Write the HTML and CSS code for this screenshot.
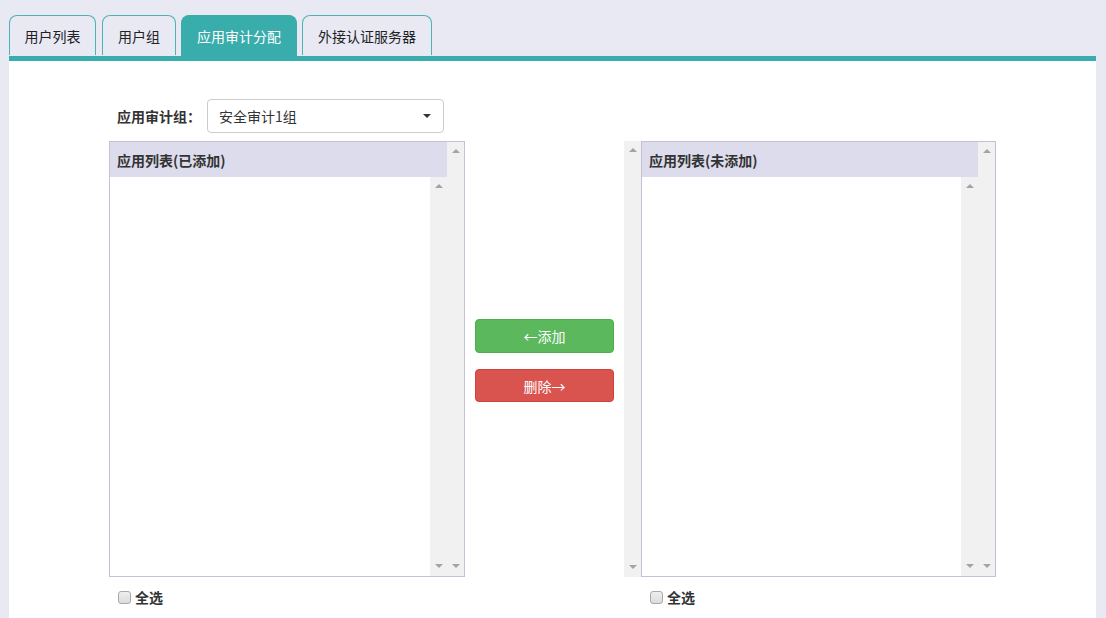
FILE: index.html
```html
<!DOCTYPE html>
<html lang="zh-CN">
<head>
<meta charset="utf-8">
<title>应用审计分配</title>
<link rel="stylesheet" href="styles.css">
</head>
<body>
<div class="page">
  <ul class="tabs">
    <li class="tab">用户列表</li>
    <li class="tab">用户组</li>
    <li class="tab tab-active">应用审计分配</li>
    <li class="tab">外接认证服务器</li>
  </ul>
  <div class="panel">
    <div class="form-row">
      <label class="field-label">应用审计组：</label>
      <div class="select">
        <span class="select-text">安全审计1组</span>
        <span class="caret"></span>
      </div>
    </div>
    <div class="lists">
      <div class="col">
        <div class="listbox">
          <div class="listbox-main">
            <div class="list-head">应用列表(已添加)</div>
            <div class="list-body">
              <div class="list-content"></div>
              <div class="sb"><i class="arr-up"></i><i class="arr-down"></i></div>
            </div>
          </div>
          <div class="sb"><i class="arr-up"></i><i class="arr-down"></i></div>
        </div>
        <label class="check"><span class="cb"></span>全选</label>
      </div>
      <div class="mid">
        <div class="mid-inner">
          <button class="btn btn-add">←添加</button>
          <button class="btn btn-del">删除→</button>
        </div>
        <div class="sb sb-mid"><i class="arr-up"></i><i class="arr-down"></i></div>
      </div>
      <div class="col">
        <div class="listbox listbox-right">
          <div class="listbox-main">
            <div class="list-head">应用列表(未添加)</div>
            <div class="list-body">
              <div class="list-content"></div>
              <div class="sb"><i class="arr-up"></i><i class="arr-down"></i></div>
            </div>
          </div>
          <div class="sb"><i class="arr-up"></i><i class="arr-down"></i></div>
        </div>
        <label class="check"><span class="cb"></span>全选</label>
      </div>
    </div>
  </div>
</div>
</body>
</html>
```
FILE: styles.css
```css
* { box-sizing: border-box; }
html, body {
  margin: 0;
  padding: 0;
  height: 100%;
  overflow: hidden;
}
body {
  background: #e9e9f4;
  font-family: "Microsoft YaHei", "Noto Sans CJK SC", "Liberation Sans", sans-serif;
  font-size: 14px;
  color: #333;
}
.page {
  padding: 15px 10px 0 9px;
}
.tabs {
  list-style: none;
  margin: 0 0 1px 0;
  padding: 0;
  display: flex;
  gap: 5px;
  height: 40px;
}
.tab {
  height: 40px;
  padding: 0;
  border: 1px solid #4db3b6;
  border-bottom: none;
  border-radius: 8px 8px 0 0;
  display: flex;
  align-items: center;
  justify-content: center;
  color: #222;
  line-height: 1;
  background: #e9e9f4;
}
.tab:nth-child(1) { width: 87px; }
.tab:nth-child(2) { width: 74px; margin-left: 1px; }
.tab:nth-child(3) { width: 116px; }
.tab:nth-child(4) { width: 130px; }
.tab-active {
  background: #39acac;
  border-color: #39acac;
  color: #fff;
  height: 41px;
}
.panel {
  background: #fff;
  border-top: 5px solid #39acac;
  height: 575px;
  padding: 38px 0 0 100px;
}
.form-row {
  display: flex;
  align-items: center;
  height: 34px;
}
.field-label {
  font-weight: bold;
  margin-left: 8px;
  width: 90px;
  color: #333;
}
.select {
  width: 237px;
  height: 34px;
  border: 1px solid #ccc;
  border-radius: 4px;
  display: flex;
  align-items: center;
  justify-content: space-between;
  padding: 0 12px 0 11px;
}
.select-text { color: #333; }
.caret {
  width: 0;
  height: 0;
  border-left: 4px solid transparent;
  border-right: 4px solid transparent;
  border-top: 4px solid #333;
}
.lists {
  display: flex;
  margin-top: 8px;
}
.col {
  display: flex;
  flex-direction: column;
}
.listbox {
  width: 356px;
  height: 436px;
  border: 1px solid #c3c0d8;
  display: flex;
}
.listbox-right { width: 355px; }
.listbox-main {
  flex: 1;
  display: flex;
  flex-direction: column;
}
.list-head {
  height: 35px;
  background: #dcdcec;
  font-weight: bold;
  display: flex;
  align-items: center;
  padding-left: 7px;
  color: #333;
}
.list-body {
  flex: 1;
  display: flex;
}
.list-content {
  flex: 1;
  background: #fff;
}
.sb {
  width: 17px;
  background: #f1f1f1;
  display: flex;
  flex-direction: column;
  justify-content: space-between;
  align-items: center;
  padding: 7px 0 8px 0;
}
.arr-up {
  width: 0;
  height: 0;
  border-left: 4px solid transparent;
  border-right: 4px solid transparent;
  border-bottom: 4px solid #a3a3a3;
}
.arr-down {
  width: 0;
  height: 0;
  border-left: 4px solid transparent;
  border-right: 4px solid transparent;
  border-top: 4px solid #a3a3a3;
}
.check {
  display: flex;
  align-items: center;
  margin: 10px 0 0 9px;
  font-weight: bold;
  height: 20px;
  color: #333;
}
.cb {
  width: 13px;
  height: 13px;
  border: 1px solid #a9a9a9;
  border-radius: 3px;
  background: linear-gradient(#eee, #dcdcdc);
  margin-right: 4px;
}
.mid {
  width: 176px;
  height: 436px;
  display: flex;
}
.mid-inner {
  flex: 1;
  display: flex;
  flex-direction: column;
  align-items: center;
  justify-content: center;
  gap: 16px;
  padding-top: 3px;
}
.sb-mid { padding-top: 7px; }
.btn {
  width: 139px;
  height: 34px;
  border-radius: 4px;
  border: 1px solid;
  color: #fff;
  font-family: inherit;
  font-size: 14px;
  padding: 0;
  cursor: pointer;
}
.btn-add {
  background: #5cb85c;
  border-color: #4cae4c;
}
.btn-del {
  background: #d9534f;
  border-color: #d43f3a;
  height: 33px;
}
```
